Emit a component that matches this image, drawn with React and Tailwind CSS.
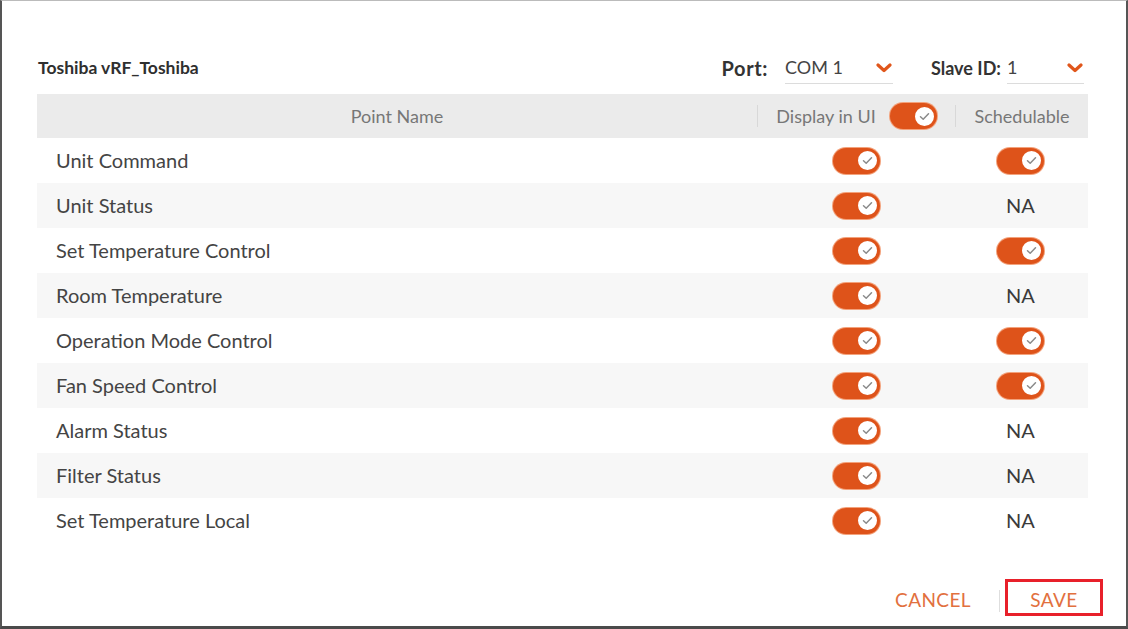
import React from 'react';

const points = [
  { name: 'Unit Command', schedulable: true },
  { name: 'Unit Status', schedulable: false },
  { name: 'Set Temperature Control', schedulable: true },
  { name: 'Room Temperature', schedulable: false },
  { name: 'Operation Mode Control', schedulable: true },
  { name: 'Fan Speed Control', schedulable: true },
  { name: 'Alarm Status', schedulable: false },
  { name: 'Filter Status', schedulable: false },
  { name: 'Set Temperature Local', schedulable: false },
];

function Toggle() {
  return (
    <div className="w-[47px] h-[26px] rounded-full bg-[#de531a] ring-1 ring-[#f3a27c] flex items-center justify-end pr-[1px]">
      <div className="w-[23px] h-[23px] rounded-full bg-white border-2 border-[#de531a] flex items-center justify-center">
        <svg width="11" height="9" viewBox="0 0 11 9" fill="none">
          <path d="M1.5 4.8 L4.2 7.2 L9.5 1.8" stroke="#8a8a8a" strokeWidth="1.5" strokeLinecap="round" strokeLinejoin="round" />
        </svg>
      </div>
    </div>
  );
}

function Chevron() {
  return (
    <svg width="16" height="10" viewBox="0 0 16 10" fill="none">
      <path d="M2 2 L8 7.5 L14 2" stroke="#e0561b" strokeWidth="3.2" strokeLinecap="round" strokeLinejoin="round" />
    </svg>
  );
}

function Select({ value, width }) {
  return (
    <div className={`${width} h-[32px] border-b border-[#dcdcdc] flex items-center justify-between pr-[1px]`}>
      <span className="text-[18px] text-[#444] pb-[1px]">{value}</span>
      <Chevron />
    </div>
  );
}

export default function App() {
  return (
    <div
      className="w-[1128px] h-[629px] bg-white border-l-2 border-t border-r-2 border-b-[3px] border-l-[#555] border-t-[#bbb] border-r-[#555] border-b-[#4a4a4a] overflow-hidden"
      style={{ fontFamily: 'Lato, "Open Sans", sans-serif' }}
    >
      {/* Title + port settings */}
      <div className="flex items-center justify-between pl-[36px] pr-[42px] pt-[51px] h-[83px]">
        <div className="text-[17.5px] font-bold text-[#2f2f2f]">Toshiba vRF_Toshiba</div>
        <div className="flex items-center">
          <span className="text-[20px] tracking-[0.6px] font-bold text-[#333] mr-[17px]">Port:</span>
          <Select value="COM 1" width="w-[108px]" />
          <span className="text-[18px] font-bold text-[#333] ml-[38px] mr-[6px]">Slave ID:</span>
          <Select value="1" width="w-[77px]" />
        </div>
      </div>

      {/* Points table */}
      <div className="ml-[35px] mr-[38px] mt-[10px]">
        <div className="grid grid-cols-[720px_199px_1fr] h-[44px] bg-[#ebebeb] text-[18px] text-[#777]">
          <div className="flex items-center justify-center">Point Name</div>
          <div className="flex items-center justify-center gap-[14px] relative">
            <span className="absolute left-0 top-[11px] h-[22px] w-px bg-[#d8d8d8]" />
            <span>Display in UI</span>
            <Toggle />
            <span className="absolute right-0 top-[11px] h-[22px] w-px bg-[#d8d8d8]" />
          </div>
          <div className="flex items-center justify-center">Schedulable</div>
        </div>
        {points.map((p, i) => (
          <div
            key={p.name}
            className={`grid grid-cols-[720px_199px_1fr] h-[45px] ${i % 2 === 1 ? 'bg-[#f7f7f7]' : 'bg-white'}`}
          >
            <div className="flex items-center pl-[19px] pb-[2px] text-[20px] text-[#444]">{p.name}</div>
            <div className="flex items-center justify-center">
              <Toggle />
            </div>
            <div className="flex items-center justify-center pr-[3px]">
              {p.schedulable ? <Toggle /> : <span className="text-[20px] text-[#3a3a3a] pb-[2px]">NA</span>}
            </div>
          </div>
        ))}
      </div>

      {/* Footer actions */}
      <div className="flex items-center justify-end pr-[23px] mt-[36px]">
        <button className="text-[19px] tracking-[0.4px] text-[#e2703e] pt-[6px]">CANCEL</button>
        <span className="w-px h-[22px] bg-[#dedede] ml-[28px] mr-[5px] mt-[6px]" />
        <div className="w-[98px] h-[37px] border-[3px] border-[#e8202a] flex items-center justify-center">
          <button className="text-[19px] tracking-[0.4px] text-[#e2703e] pt-[6px]">SAVE</button>
        </div>
      </div>
    </div>
  );
}
